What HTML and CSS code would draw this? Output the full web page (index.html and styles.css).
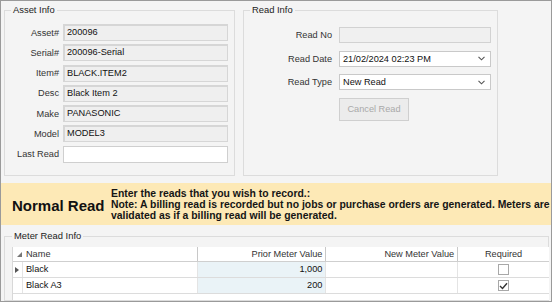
FILE: index.html
```html
<!DOCTYPE html>
<html>
<head>
<meta charset="utf-8">
<link rel="stylesheet" href="styles.css">
</head>
<body>
<div class="frame">
  <div class="top">
    <fieldset class="group asset">
      <legend>Asset Info</legend>
      <div class="rows">
        <div class="row"><label>Asset#</label><div class="box ro">200096</div></div>
        <div class="row"><label>Serial#</label><div class="box ro">200096-Serial</div></div>
        <div class="row"><label>Item#</label><div class="box ro">BLACK.ITEM2</div></div>
        <div class="row"><label>Desc</label><div class="box ro">Black Item 2</div></div>
        <div class="row"><label>Make</label><div class="box ro">PANASONIC</div></div>
        <div class="row"><label>Model</label><div class="box ro">MODEL3</div></div>
        <div class="row"><label>Last Read</label><div class="box"></div></div>
      </div>
    </fieldset>
    <fieldset class="group read">
      <legend>Read Info</legend>
      <div class="rows2">
        <div class="row2"><label>Read No</label><div class="box2 ro"></div></div>
        <div class="row2"><label>Read Date</label><div class="box2 sel"><span>21/02/2024 02:23 PM</span><svg class="chev" width="7" height="5" viewBox="0 0 7 5"><path d="M0.5 0.8 L3.5 3.8 L6.5 0.8" fill="none" stroke="#555" stroke-width="1.1"/></svg></div></div>
        <div class="row2"><label>Read Type</label><div class="box2 sel"><span>New Read</span><svg class="chev" width="7" height="5" viewBox="0 0 7 5"><path d="M0.5 0.8 L3.5 3.8 L6.5 0.8" fill="none" stroke="#555" stroke-width="1.1"/></svg></div></div>
        <div class="row2 btnrow"><span class="spacer"></span><div class="btn">Cancel Read</div></div>
      </div>
    </fieldset>
  </div>
  <div class="banner">
    <div class="title">Normal Read</div>
    <div class="msg">Enter the reads that you wish to record.:<br>Note: A billing read is recorded but no jobs or purchase orders are generated. Meters are<br>validated as if a billing read will be generated.</div>
  </div>
  <fieldset class="group meter">
    <legend>Meter Read Info</legend>
    <div class="grid">
      <div class="gr head">
        <div class="c ind"><svg width="5" height="5" viewBox="0 0 5 5"><path d="M5 0 L5 5 L0 5 Z" fill="#777"/></svg></div>
        <div class="c name">Name</div>
        <div class="c prior">Prior Meter Value</div>
        <div class="c newv">New Meter Value</div>
        <div class="c req">Required</div>
      </div>
      <div class="gr">
        <div class="c ind"><svg width="4" height="6" viewBox="0 0 4 6"><path d="M0 0 L4 3 L0 6 Z" fill="#555"/></svg></div>
        <div class="c name">Black</div>
        <div class="c prior v">1,000</div>
        <div class="c newv"></div>
        <div class="c req"><span class="cb"></span></div>
      </div>
      <div class="gr">
        <div class="c ind"></div>
        <div class="c name">Black A3</div>
        <div class="c prior v">200</div>
        <div class="c newv"></div>
        <div class="c req"><span class="cb"><svg width="9" height="8" viewBox="0 0 9 8"><path d="M1 4 L3.5 6.5 L8 1.2" fill="none" stroke="#333" stroke-width="1.4"/></svg></span></div>
      </div>
    </div>
  </fieldset>
</div>
</body>
</html>
```
FILE: styles.css
```css
* { box-sizing: border-box; }
html, body { margin: 0; padding: 0; }
body { font-family: "Liberation Sans", Arial, sans-serif; font-size: 9.2px; color: #111; }
.frame {
  width: 552px; height: 302px; border: 1px solid #9a9a9a; background: #f4f4f4;
  overflow: hidden; display: flex; flex-direction: column;
}
.top { display: flex; gap: 8px; padding: 4px 0 0 3px; height: 175px; flex: none; }
.group { border: 1px solid #dcdcdc; margin: 0; padding: 0; min-width: 0; }
.group legend { margin-left: 6px; padding: 0 2px; font-size: 9.4px; color: #222; line-height: 10px; }
.asset { width: 231px; height: 171px; }
.read { width: 255px; height: 171px; }
.rows { display: flex; flex-direction: column; gap: 3.3px; padding-top: 9px; }
.row { display: flex; align-items: center; height: 17px; }
.row label { width: 54px; text-align: right; padding-right: 0; color: #333; }
.box { width: 165px; height: 17px; margin-left: 4px; border: 1px solid #cfcfcf; background: #fff; padding: 1px 3px; line-height: 13px; white-space: nowrap; }
.box.ro { background: #efefef; border-width: 2px 1px 1px 2px; border-color: #d6d6d6; padding: 0 2px; }
.rows2 { display: flex; flex-direction: column; padding-top: 12px; }
.row2 { display: flex; align-items: center; height: 16px; margin-bottom: 7.5px; flex: none; }
.row2.btnrow { height: 23px; }
.row2 label, .row2 .spacer { width: 90px; text-align: right; padding-right: 2px; color: #333; flex: none; }
.box2 { width: 152px; height: 16px; margin-left: 5px; border: 1px solid #c9c9c9; background: #fff; padding: 0 3px; line-height: 14px; display: flex; align-items: center; justify-content: space-between; }
.box2.ro { background: #f0f0f0; border-color: #d2d2d2; }
.chev { margin-right: 2px; }
.btn { margin-left: 5px; width: 70px; height: 23px; border: 1px solid #cfcfcf; background: #ececec; color: #a9a9a9; display: flex; align-items: center; justify-content: center; }
.banner { margin-top: 7px; height: 42px; background: #fde9b6; display: flex; align-items: center; padding-left: 11px; flex: none; }
.title { font-weight: bold; font-size: 15px; color: #111; width: 99px; flex: none; padding-top: 3px; }
.msg { font-weight: bold; font-size: 10.4px; line-height: 11px; color: #151515; white-space: nowrap; flex: none; }
.meter { margin: 6px 2px 0 3px; flex: 1; display: flex; flex-direction: column; }
.meter legend { margin-left: 7px; }
.grid { margin: 6px 0 0 7px; border-left: 1px solid #d8d8d8; width: 537px; flex: 1; background: #fff; }
.gr { display: flex; height: 16px; border-bottom: 1px solid #dcdcdc; background: #fff; }
.gr.head { height: 15px; border-bottom: 1px solid #cfcfcf; }
.c { border-right: 1px solid #e4e4e4; padding: 0 3px; line-height: 14px; white-space: nowrap; overflow: hidden; }
.head .c { border-right-color: #c8c8c8; color: #333; }
.ind { width: 10px; padding: 0; display: flex; align-items: center; justify-content: center; }
.head .ind { justify-content: flex-end; padding-right: 1px; border-right: none; }
.name { width: 175px; }
.prior { width: 129px; text-align: right; }
.gr:not(.head) .prior { background: #eaf3f7; }
.newv { width: 132px; text-align: right; }
.req { width: 91px; text-align: center; border-right: none; display: flex; align-items: center; justify-content: center; }
.cb { width: 11px; height: 11px; border: 1px solid #a8a8a8; background: #fff; display: flex; align-items: center; justify-content: center; }
```
